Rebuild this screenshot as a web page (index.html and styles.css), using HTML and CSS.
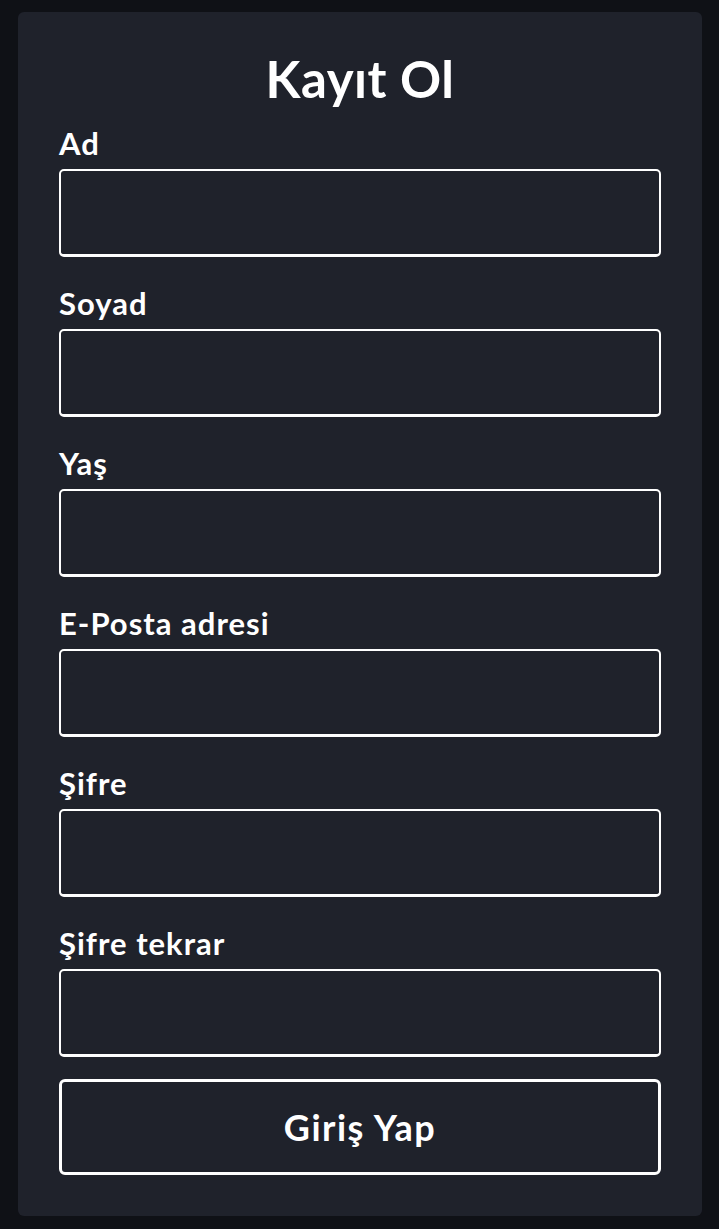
FILE: index.html
```html
<!DOCTYPE html>
<html lang="tr">
<head>
<meta charset="utf-8">
<title>Kayıt Ol</title>
<link rel="stylesheet" href="styles.css">
</head>
<body>
<form class="card">
  <h1 class="title">Kayıt Ol</h1>
  <div class="fields">
    <div class="field"><label class="label">Ad</label><input class="input" type="text"></div>
    <div class="field"><label class="label">Soyad</label><input class="input" type="text"></div>
    <div class="field"><label class="label">Yaş</label><input class="input" type="text"></div>
    <div class="field"><label class="label">E-Posta adresi</label><input class="input" type="email"></div>
    <div class="field"><label class="label">Şifre</label><input class="input" type="password"></div>
    <div class="field"><label class="label">Şifre tekrar</label><input class="input" type="password"></div>
  </div>
  <button class="button" type="button">Giriş Yap</button>
</form>
</body>
</html>
```
FILE: styles.css
```css
html, body {
  margin: 0;
  padding: 0;
  background: #0f1116;
}
body {
  font-family: Lato, "Open Sans", sans-serif;
  color: #ffffff;
  padding: 12px 17px 13px 18px;
}
.card {
  background: #1f222b;
  border-radius: 6px;
  padding: 37px 41px 41px;
  display: flex;
  flex-direction: column;
}
.title {
  margin: 0 0 14px;
  font-size: 51px;
  line-height: 60px;
  font-weight: 700;
  letter-spacing: 0.5px;
  text-align: center;
}
.fields {
  display: flex;
  flex-direction: column;
  gap: 26px;
}
.field {
  display: flex;
  flex-direction: column;
  gap: 6px;
}
.label {
  font-size: 31px;
  line-height: 40px;
  font-weight: 700;
  letter-spacing: 1px;
}
.input {
  box-sizing: border-box;
  height: 88px;
  margin: 0;
  background: transparent;
  border: 2px solid #ffffff;
  border-bottom-width: 3px;
  border-radius: 5px;
  color: #fff;
  font: inherit;
  outline: none;
}
.button {
  box-sizing: border-box;
  margin-top: 22px;
  height: 96px;
  background: transparent;
  border: 3px solid #ffffff;
  border-radius: 6px;
  color: #fff;
  font-family: inherit;
  font-size: 36px;
  font-weight: 700;
  letter-spacing: 1.5px;
}
```
